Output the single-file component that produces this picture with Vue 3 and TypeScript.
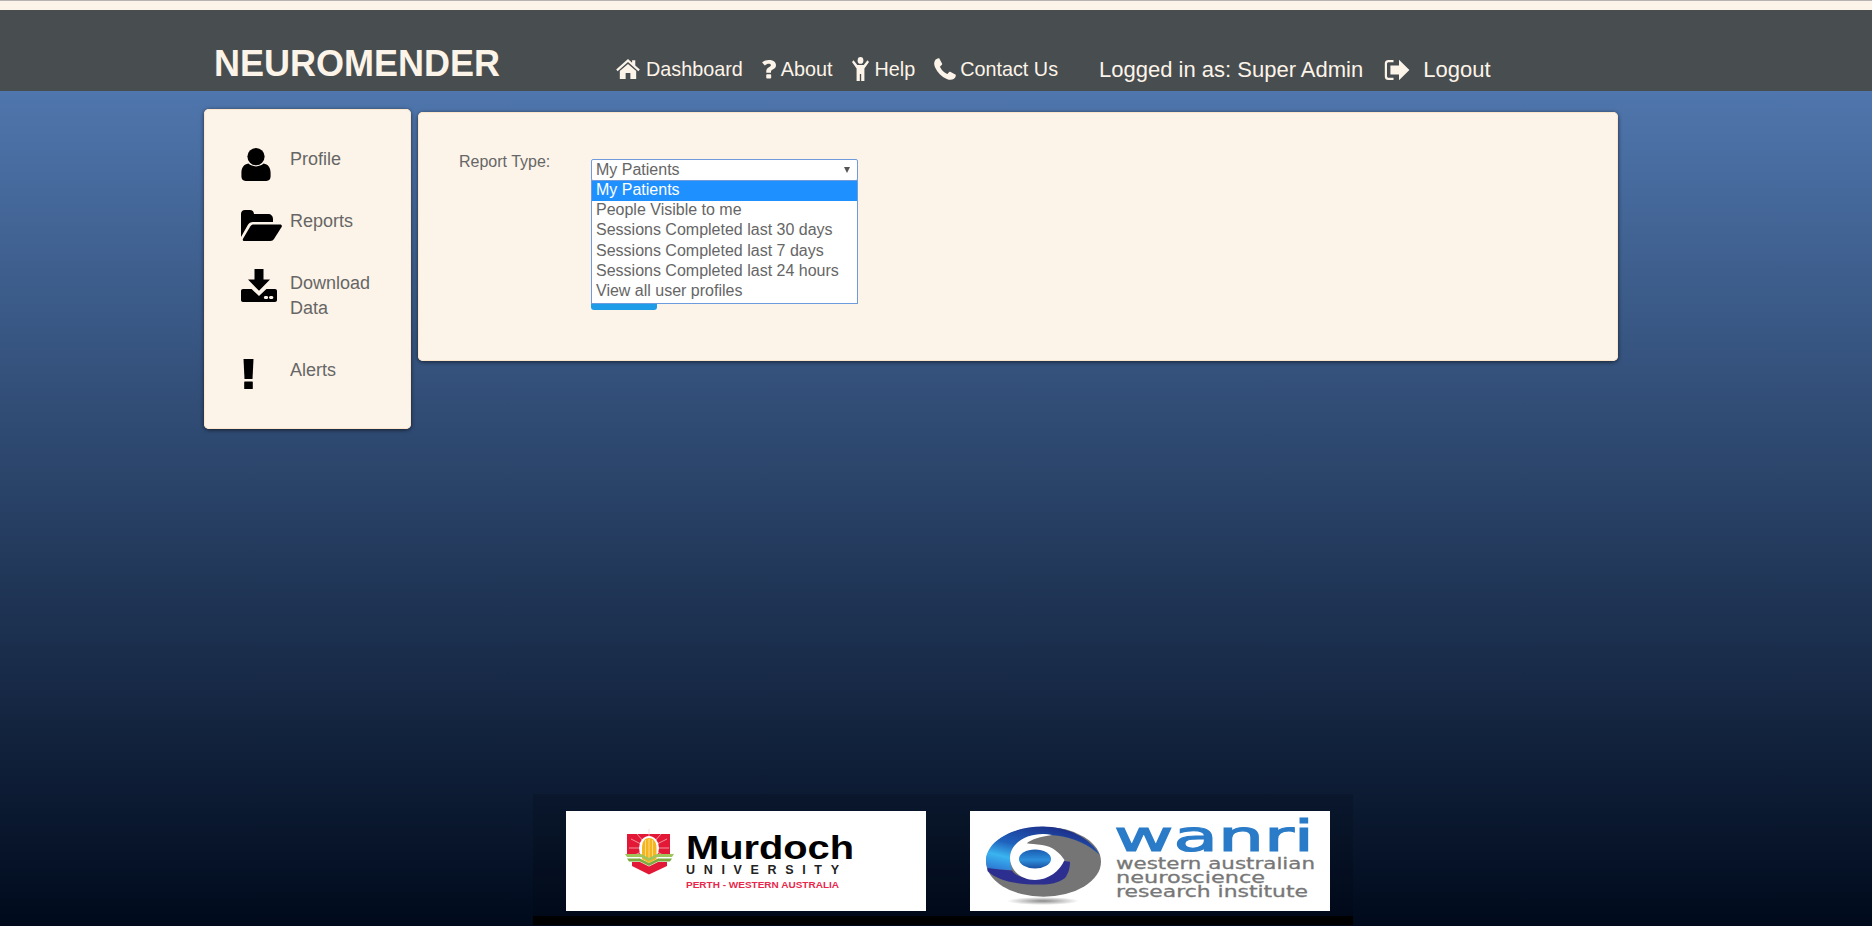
<script setup lang="ts">
const navLinks = [
  { label: 'Dashboard', icon: 'home' },
  { label: 'About', icon: 'question' },
  { label: 'Help', icon: 'child' },
  { label: 'Contact Us', icon: 'phone' },
]

const sideLinks = [
  { label: 'Profile', icon: 'user' },
  { label: 'Reports', icon: 'folder' },
  { label: 'Download Data', icon: 'download' },
  { label: 'Alerts', icon: 'alert' },
]

const reportTypes = [
  'My Patients',
  'People Visible to me',
  'Sessions Completed last 30 days',
  'Sessions Completed last 7 days',
  'Sessions Completed last 24 hours',
  'View all user profiles',
]
</script>

<template>
  <div class="page">
    <div class="topstrip" />
    <header class="header">
      <div class="brand">NEUROMENDER</div>
      <nav class="nav">
        <a v-for="link in navLinks" :key="link.label" class="nav-link" :class="'nav-' + link.icon">
          <svg v-if="link.icon === 'home'" class="nav-icon" viewBox="0 0 26 22" width="24" height="20">
            <path d="M13 0 L17.5 4 V1.5 H21 V7.2 L26 11.6 L24.4 13.4 L13 3.4 L1.6 13.4 L0 11.6 Z" />
            <path d="M13 5.4 L22 13.2 V22 H15.6 V15.4 H10.4 V22 H4 V13.2 Z" />
          </svg>
          <svg v-else-if="link.icon === 'question'" class="nav-icon" viewBox="0 0 14 20" width="15" height="19" preserveAspectRatio="none">
            <path d="M1 2.6 C3 .8 5 0 7.4 0 C11 0 14 2 14 5.4 C14 7.8 12.6 9 11 10 C9.8 10.8 9.3 11.2 9.3 12.6 V13.4 H4.9 V12 C4.9 9.6 6 8.6 7.4 7.6 C8.6 6.8 9.2 6.4 9.2 5.5 C9.2 4.5 8.3 4 7.2 4 C6 4 4.8 4.6 3.6 5.8 Z" />
            <rect x="4.9" y="15" width="4.6" height="4.6" rx=".8" />
          </svg>
          <svg v-else-if="link.icon === 'child'" class="nav-icon" viewBox="0 0 20 24" width="17" height="24" preserveAspectRatio="none">
            <circle cx="10" cy="3.4" r="3.4" />
            <path d="M1.8 3.2 L6.2 8 H13.8 L18.2 3.2 L20 5 L14.6 11.6 V24 H10.8 V17 H9.2 V24 H5.4 V11.6 L0 5 Z" />
          </svg>
          <svg v-else class="nav-icon" viewBox="0 0 22 22" width="22" height="22">
            <path d="M5.2 .2 L8 5.4 C8.3 6 8.2 6.6 7.7 7 L6 8.6 C6.9 11.6 10.4 15.1 13.4 16 L15 14.3 C15.4 13.8 16 13.7 16.6 14 L21.8 16.8 C22 18.4 21 20.2 19.6 21 C18 22 15.6 22.2 12.8 21 C7.4 18.6 3.4 14.6 1 9.2 C-.2 6.4 0 4 1 2.4 C1.8 1 3.6 0 5.2 .2 Z" />
          </svg>
          <span>{{ link.label }}</span>
        </a>
        <span class="user">Logged in as: Super Admin</span>
        <a class="logout">
          <svg class="nav-icon" viewBox="0 0 26 22" width="26" height="22">
            <path d="M9.5 1 H4.5 C2 1 .8 2.4 .8 4.6 V17.4 C.8 19.6 2 21 4.5 21 H9.5 V18.8 H4.8 C3.6 18.8 3 18.2 3 17 V5 C3 3.8 3.6 3.2 4.8 3.2 H9.5 Z" />
            <path d="M15 .8 L25.4 11 L15 21.2 V15.6 H6.4 V6.4 H15 Z" />
          </svg>
          <span>Logout</span>
        </a>
      </nav>
    </header>

    <div class="content">
      <aside class="sidebar">
        <a v-for="link in sideLinks" :key="link.label" class="side-link" :class="'side-' + link.icon">
          <span class="side-icon">
            <svg v-if="link.icon === 'user'" viewBox="0 0 30 33" width="30" height="33">
              <circle cx="15" cy="8.6" r="8.6" />
              <path d="M7.4 15.6 C9.4 17.4 12 18.4 15 18.4 C18 18.4 20.6 17.4 22.6 15.6 C27 16.4 29.6 19.4 29.6 25 V28.6 C29.6 31.2 28 33 25.4 33 H4.6 C2 33 .4 31.2 .4 28.6 V25 C.4 19.4 3 16.4 7.4 15.6 Z" />
            </svg>
            <svg v-else-if="link.icon === 'folder'" viewBox="0 0 41 31" width="41" height="31">
              <path d="M0 27 V4 C0 1.6 1.6 0 4 0 H9 C11.2 0 12.8 1.4 13 4 H27 C30 4 32 6 32 9 V12 H12 C9.6 12 8 13 6.8 15 L0 27 Z" />
              <path d="M12.6 14.4 H39 C40.6 14.4 41.4 15.6 40.6 17 L33 29 C32.2 30.2 31 31 29.4 31 H3.4 C2 31 1.4 30 2 28.8 L9.4 16.2 C10.2 15 11.2 14.4 12.6 14.4 Z" />
            </svg>
            <svg v-else-if="link.icon === 'download'" viewBox="0 0 36 33" width="36" height="33">
              <path d="M13.5 0 H22.5 V10.6 H29 L18 21.8 L7 10.6 H13.5 Z" />
              <path fill-rule="evenodd" d="M2 20 H10.6 L18 27 L25.4 20 H34 C35.2 20 36 20.8 36 22 V31 C36 32.2 35.2 33 34 33 H2 C.8 33 0 32.2 0 31 V22 C0 20.8 .8 20 2 20 Z M25 27 A1.6 1.6 0 1 0 25 30 A1.6 1.6 0 1 0 25 27 Z M30.2 27 A1.6 1.6 0 1 0 30.2 30 A1.6 1.6 0 1 0 30.2 27 Z" />
            </svg>
            <svg v-else viewBox="0 0 11 30" width="11" height="30">
              <path d="M.5 0 H10.5 L9.5 20 H1.5 Z" />
              <rect x="1.2" y="22.4" width="8.6" height="7.6" rx=".6" />
            </svg>
          </span>
          <span class="side-label">{{ link.label }}</span>
        </a>
      </aside>

      <main class="panel">
        <label class="field-label">Report Type:</label>
        <div class="field">
          <div class="select">
            <span>My Patients</span>
            <i class="caret" />
          </div>
          <button class="submit" type="button" />
          <ul class="options">
            <li
              v-for="(item, index) in reportTypes"
              :key="item"
              :class="{ selected: index === 0 }"
            >
              {{ item }}
            </li>
          </ul>
        </div>
      </main>
    </div>

    <footer class="footer">
      <div class="logo">
        <svg viewBox="0 0 360 100" width="360" height="100">
          <path d="M61 23 H104 V46 H61 Z" fill="#e31837" />
          <path d="M83 18 V50 M65 28 L101 46 M65 46 L101 28 M71 23 L95 50 M95 23 L71 50 M63 37 H103" stroke="#f7c9c9" stroke-width=".7" />
          <ellipse cx="83" cy="37" rx="10" ry="12" fill="#fff" />
          <path d="M76 37 C76 30 79 27 83 27 C87 27 90.5 30 90.5 37 V48 L83 52 L76 48 Z" fill="#f6b41e" />
          <path d="M79.5 29 V48 M83 28 V50 M86.5 29 V48" stroke="#fbd98a" stroke-width="1" />
          <path d="M59 43 H75 L83 47 L91 43 H108 L106 46 H91 L83 50 L75 46 H61 Z" fill="#9fc55a" />
          <path d="M61 47.5 H74 L83 52 L92 47.5 H106 L104 50.5 H92 L83 55 L74 50.5 H63 Z" fill="#7dab3f" />
          <path d="M66 51 H74 L83 55.5 L92 51 H101 V55 L83 63.5 L66 55 Z" fill="#e31837" />
          <text x="120" y="48" class="murdoch" textLength="168" lengthAdjust="spacingAndGlyphs">Murdoch</text>
          <text x="120" y="63" class="university" textLength="153" lengthAdjust="spacing">UNIVERSITY</text>
          <text x="120" y="77" class="perth" textLength="153" lengthAdjust="spacingAndGlyphs">PERTH - WESTERN AUSTRALIA</text>
        </svg>
      </div>
      <div class="logo">
        <svg viewBox="0 0 360 100" width="360" height="100">
          <defs>
            <linearGradient id="swirlBlue" x1="0" y1="1" x2=".6" y2="0">
              <stop offset="0" stop-color="#2a6fd0" />
              <stop offset=".3" stop-color="#3ab4f0" />
              <stop offset=".55" stop-color="#1f62bd" />
              <stop offset="1" stop-color="#1c2f8a" />
            </linearGradient>
            <linearGradient id="ballBlue" x1="0" y1="0" x2="0" y2="1">
              <stop offset="0" stop-color="#1a5cb0" />
              <stop offset=".55" stop-color="#2d8fdc" />
              <stop offset="1" stop-color="#1a4fa0" />
            </linearGradient>
            <radialGradient id="swirlShadow">
              <stop offset="0" stop-color="#8a8a8a" />
              <stop offset="1" stop-color="#fff" />
            </radialGradient>
          </defs>
          <ellipse cx="73" cy="90" rx="36" ry="4" fill="url(#swirlShadow)" />
          <ellipse cx="73.5" cy="50.7" rx="57.5" ry="35" fill="#757575" />
          <path d="M16 48 C18 28 46 15.5 72 15.5 C98 15.5 120 27 130 44 C118 33 104 27 88 24.7 C80 23.6 72 23.4 65 24 C50 26 40 36 40 47.3 C40 52 41 56 42 59 C34 59 26 58 18.3 59 C16.5 55 16 52 16 48 Z" fill="url(#swirlBlue)" />
          <path d="M17.5 57 C26 58 34 59 42 59.5 C48 70 78 72 94 50 L100 50.7 C100 58 98 63 95 67 C88 72 80 73.5 71.7 73.5 C55 74 30 72 17.5 60 Z" fill="#2c2f8f" />
          <path d="M82 24 C62 20 40 30 40 47 C40 58 50 69 65 69 C78 69 90 60 94.5 49 C90 42 82 35 72 34 C66 33.3 60 33 56.7 32.3 C62 28 70 26 82 24 Z" fill="#fff" />
          <ellipse cx="65" cy="48" rx="16" ry="9.5" fill="url(#ballBlue)" />
          <text x="144" y="40" class="wanri" textLength="200" lengthAdjust="spacingAndGlyphs">wanri</text>
          <text x="146" y="58" class="wanri-sub" textLength="199" lengthAdjust="spacingAndGlyphs">western australian</text>
          <text x="146" y="72" class="wanri-sub" textLength="149" lengthAdjust="spacingAndGlyphs">neuroscience</text>
          <text x="146" y="86" class="wanri-sub" textLength="192" lengthAdjust="spacingAndGlyphs">research institute</text>
        </svg>
      </div>
    </footer>
  </div>
</template>

<style>
html,
body {
  margin: 0;
  padding: 0;
}
</style>

<style scoped>
.page {
  display: flex;
  flex-direction: column;
  height: 926px;
  overflow: hidden;
  background: linear-gradient(to bottom, #4f76ad 91px, #000a1c 926px);
  font-family: "Liberation Sans", Arial, sans-serif;
}

.topstrip {
  height: 9px;
  border-top: 1px solid #b8b3b3;
  background: #fdf4e9;
}

.header {
  display: flex;
  align-items: flex-end;
  height: 81px;
  padding-left: 214px;
  background: #484d50;
  color: #fdf4e9;
}

.brand {
  width: 402px;
  margin-bottom: 7px;
  font-size: 36px;
  font-weight: 700;
  line-height: 41px;
}

.nav {
  display: flex;
  align-items: center;
  height: 30px;
  margin-bottom: 6px;
  font-size: 19.8px;
  white-space: nowrap;
}

.nav-link,
.logout {
  display: flex;
  align-items: center;
}

.nav-link {
  margin-bottom: 2px;
}

.nav-icon {
  flex: none;
  fill: currentColor;
}

.nav-home { gap: 6px; margin-right: 18px; }
.nav-question { gap: 5px; margin-right: 20px; }
.nav-child { gap: 5px; margin-right: 19px; }
.nav-phone { gap: 4px; margin-right: 41px; }

.user {
  margin-right: 21px;
  font-size: 22px;
}

.logout {
  gap: 13px;
  font-size: 22px;
}

.content {
  display: flex;
  align-items: flex-start;
  gap: 7px;
  padding: 18px 0 0 204px;
}

.sidebar {
  display: flex;
  flex-direction: column;
  box-sizing: border-box;
  width: 207px;
  height: 320px;
  padding: 38px 20px 0 37px;
  border-radius: 5px;
  background: #fdf4e9;
  box-shadow: inset 0 0 0 1px #fbe6cc, 0 1px 4px rgba(0, 0, 0, 0.6);
}

.side-link {
  display: flex;
  color: #666;
  font-size: 18px;
  line-height: 25px;
}

.side-user { height: 62px; }
.side-folder { height: 62px; }
.side-download { height: 87px; }

.side-icon {
  flex: none;
  width: 49px;
  padding-top: 1px;
  line-height: 0;
}

.side-download .side-icon {
  margin-top: -3px;
}

.side-alert .side-icon {
  width: 47px;
  margin-left: 2px;
}

.side-label {
  width: 90px;
}

.panel {
  display: flex;
  box-sizing: border-box;
  width: 1200px;
  height: 249px;
  margin-top: 3px;
  padding: 40px 0 0 41px;
  border-radius: 5px;
  background: #fdf4e9;
  box-shadow: inset 0 0 0 1px #fbe6cc, 0 1px 4px rgba(0, 0, 0, 0.6);
}

.field-label {
  width: 132px;
  color: #666;
  font-size: 16px;
  line-height: 20px;
}

.field {
  position: relative;
  width: 267px;
  padding-top: 7px;
}

.select {
  display: flex;
  align-items: center;
  justify-content: space-between;
  box-sizing: border-box;
  height: 22px;
  padding: 0 7px 0 4px;
  border: 1px solid #6f9bdc;
  border-radius: 2px;
  background: #fff;
  color: #666;
  font-size: 16px;
}

.caret {
  width: 0;
  height: 0;
  border-top: 6px solid #555;
  border-right: 3px solid transparent;
  border-left: 3px solid transparent;
}

.submit {
  display: block;
  width: 66px;
  height: 40px;
  margin-top: 89px;
  padding: 0;
  border: 0;
  border-radius: 3px;
  background: #1f9ce8;
}

.options {
  position: absolute;
  top: 28px;
  left: 0;
  box-sizing: border-box;
  width: 267px;
  margin: 0;
  padding: 0 0 1px;
  border: 1px solid #6f9bdc;
  background: #fff;
  color: #666;
  font-size: 16px;
  list-style: none;
}

.options li {
  height: 20.2px;
  padding-left: 4px;
  line-height: 17px;
}

.options li.selected {
  background: #1e90ff;
  color: #fff;
}

.footer {
  display: flex;
  gap: 44px;
  box-sizing: border-box;
  width: 820px;
  height: 131px;
  margin-top: auto;
  margin-bottom: 1px;
  margin-left: 533px;
  padding: 17px 0 0 33px;
  border-bottom: 9px solid #000;
  background: rgba(0, 0, 0, 0.12);
}

.logo {
  width: 360px;
  height: 100px;
  background: #fff;
  line-height: 0;
}

.murdoch {
  font-family: "Liberation Sans", sans-serif;
  font-size: 33px;
  font-weight: 700;
}

.university {
  font-family: "Liberation Sans", sans-serif;
  font-size: 12.5px;
  font-weight: 700;
  fill: #222;
}

.perth {
  fill: #e8274b;
  font-family: "Liberation Sans", sans-serif;
  font-size: 9px;
  font-weight: 700;
}

.wanri {
  fill: #2a7bc8;
  stroke: #2a7bc8;
  stroke-width: 1.2px;
  font-family: "DejaVu Sans", sans-serif;
  font-size: 42px;
}

.wanri-sub {
  fill: #777;
  stroke: #777;
  stroke-width: 0.3px;
  font-family: "DejaVu Sans", sans-serif;
  font-size: 16px;
}
</style>
